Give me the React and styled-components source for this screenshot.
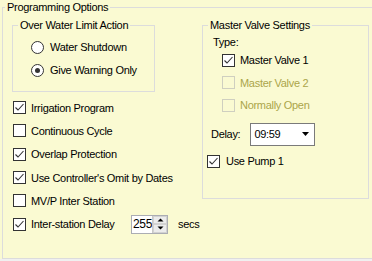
import React from 'react'
import styled, { createGlobalStyle } from 'styled-components'

const Global = createGlobalStyle`
  html, body { margin: 0; padding: 0; }
  body {
    background: #fafad2;
    font-family: "Liberation Sans", Arial, sans-serif;
    font-size: 11px;
    letter-spacing: -0.3px;
    color: #000;
  }
`;

const Page = styled.div`
  width: 372px;
  height: 261px;
  overflow: hidden;
  background: #fafad2;
  display: flex;
  flex-direction: column;
  padding-top: 7px;
  box-sizing: border-box;
`;

const GroupBox = styled.div`
  box-sizing: border-box;
  border: 1px solid #dcdcdc;
  width: ${p => p.$w}px;
  height: ${p => p.$h}px;
  margin-left: ${p => p.$ml || 0}px;
  flex-shrink: 0;
`;

const GroupTitle = styled.div`
  width: fit-content;
  margin: -8px 0 0 ${p => p.$ml}px;
  padding: 0 2px;
  line-height: 14px;
  background: #fafad2;
  white-space: nowrap;
`;

const Strip = styled.div`
  flex: 1;
  background: #f0f0f0;
`;

const Body = styled.div`
  display: flex;
  padding-left: 9px;
  margin-top: 11px;
`;

const LeftCol = styled.div`
  width: 190px;
  display: flex;
  flex-direction: column;
`;

const RightCol = styled.div`
  display: flex;
  flex-direction: column;
`;

const RadioList = styled.div`
  display: flex;
  flex-direction: column;
  padding: 3.5px 0 0 18px;
`;

const Spacer = styled.div`
  height: ${p => p.$h}px;
`;

const Row = styled.div`
  display: flex;
  align-items: center;
  height: ${p => p.$h || 23.3}px;
  padding-left: ${p => p.$pl || 0}px;
  margin-top: ${p => p.$mt || 0}px;
  gap: ${p => p.$gap || 5}px;
  white-space: nowrap;
  color: ${p => (p.$disabled ? '#aba54a' : '#000')};
`;

const Radio = styled.span`
  box-sizing: border-box;
  width: 13px;
  height: 13px;
  border-radius: 50%;
  border: 1px solid #333;
  background: #fff;
  display: flex;
  align-items: center;
  justify-content: center;
  &::after {
    content: '';
    width: 5px;
    height: 5px;
    border-radius: 50%;
    background: ${p => (p.$on ? '#333' : 'transparent')};
  }
`;

const Box = styled.span`
  box-sizing: border-box;
  width: 13px;
  height: 13px;
  border: 1px solid ${p => (p.$disabled ? '#cfcfc0' : '#333')};
  background: ${p => (p.$disabled ? 'transparent' : '#fff')};
  display: flex;
  align-items: center;
  justify-content: center;
  flex-shrink: 0;
`;

const Label = styled.div`
  line-height: 14px;
  margin-top: ${p => p.$mt || 0}px;
  padding-left: ${p => p.$pl || 0}px;
`;

const FixedText = styled.span`
  width: ${p => p.$w}px;
`;

const Combo = styled.div`
  box-sizing: border-box;
  width: 65px;
  height: 23px;
  border: 1px solid #7a7a7a;
  background: #fff;
  display: flex;
  align-items: center;
  justify-content: space-between;
  padding: 0 5px 0 3px;
`;

const Spinner = styled.div`
  box-sizing: border-box;
  width: 37px;
  height: 19px;
  border: 1px solid #abadb3;
  background: #fff;
  display: flex;
  font-size: 12px;
`;

const SpinValue = styled.span`
  flex: 1;
  line-height: 17px;
  padding-left: 1px;
`;

const SpinButtons = styled.div`
  width: 14px;
  display: flex;
  flex-direction: column;
  border-left: 1px solid #c8c8c8;
`;

const SpinBtn = styled.div`
  flex: 1;
  background: #ececec;
  border: 1px solid #d2d2d2;
  display: flex;
  align-items: center;
  justify-content: center;
`;

const Secs = styled.span`
  margin-left: 5px;
`;

const Check = ({ on, disabled }) => (
  <Box $disabled={disabled}>
    {on && (
      <svg width="11" height="11" viewBox="0 0 11 11">
        <path d="M1.5 5.5 L4 8 L9.5 2" stroke="#333" strokeWidth="1.1" fill="none" />
      </svg>
    )}
  </Box>
);

const Tri = ({ up }) => (
  <svg width="7" height="4" viewBox="0 0 7 4">
    <path d={up ? 'M0.5 3.5 L3.5 0.5 L6.5 3.5 Z' : 'M0.5 0.5 L6.5 0.5 L3.5 3.5 Z'} fill="#000" />
  </svg>
);

const checks = [
  ['Irrigation Program', true],
  ['Continuous Cycle', false],
  ['Overlap Protection', true],
  ["Use Controller's Omit by Dates", true],
  ['MV/P Inter Station', false],
];

export default function App() {
  return (
    <Page>
      <Global />
      <GroupBox $w={400} $h={252} $ml={2}>
        <GroupTitle $ml={2}>Programming Options</GroupTitle>
        <Body>
          <LeftCol>
            <GroupBox $w={143} $h={67}>
              <GroupTitle $ml={5}>Over Water Limit Action</GroupTitle>
              <RadioList>
                <Row $gap={6}><Radio />Water Shutdown</Row>
                <Row $gap={6}><Radio $on />Give Warning Only</Row>
              </RadioList>
            </GroupBox>
            <Spacer $h={4} />
            {checks.map(([t, on]) => (
              <Row key={t} $pl={1}><Check on={on} />{t}</Row>
            ))}
            <Row $pl={1}>
              <Check on />
              <FixedText $w={95}>Inter-station Delay</FixedText>
              <Spinner>
                <SpinValue>255</SpinValue>
                <SpinButtons>
                  <SpinBtn><Tri up /></SpinBtn>
                  <SpinBtn><Tri /></SpinBtn>
                </SpinButtons>
              </Spinner>
              <Secs>secs</Secs>
            </Row>
          </LeftCol>
          <RightCol>
            <GroupBox $w={167} $h={174}>
              <GroupTitle $ml={5}>Master Valve Settings</GroupTitle>
              <Label $mt={3} $pl={10}>Type:</Label>
              <Row $h={22.5} $pl={19}><Check on />Master Valve 1</Row>
              <Row $h={22.5} $pl={19} $disabled><Check disabled />Master Valve 2</Row>
              <Row $h={22.5} $pl={19} $disabled><Check disabled />Normally Open</Row>
              <Row $h={23} $pl={8} $mt={6} $gap={10}>
                Delay:
                <Combo>
                  <span>09:59</span>
                  <svg width="7" height="4" viewBox="0 0 7 4"><path d="M0 0 L7 0 L3.5 4 Z" fill="#000" /></svg>
                </Combo>
              </Row>
              <Row $h={22} $pl={4} $mt={4.5} $gap={6}><Check on />Use Pump 1</Row>
            </GroupBox>
          </RightCol>
        </Body>
      </GroupBox>
      <Strip />
    </Page>
  )
}
